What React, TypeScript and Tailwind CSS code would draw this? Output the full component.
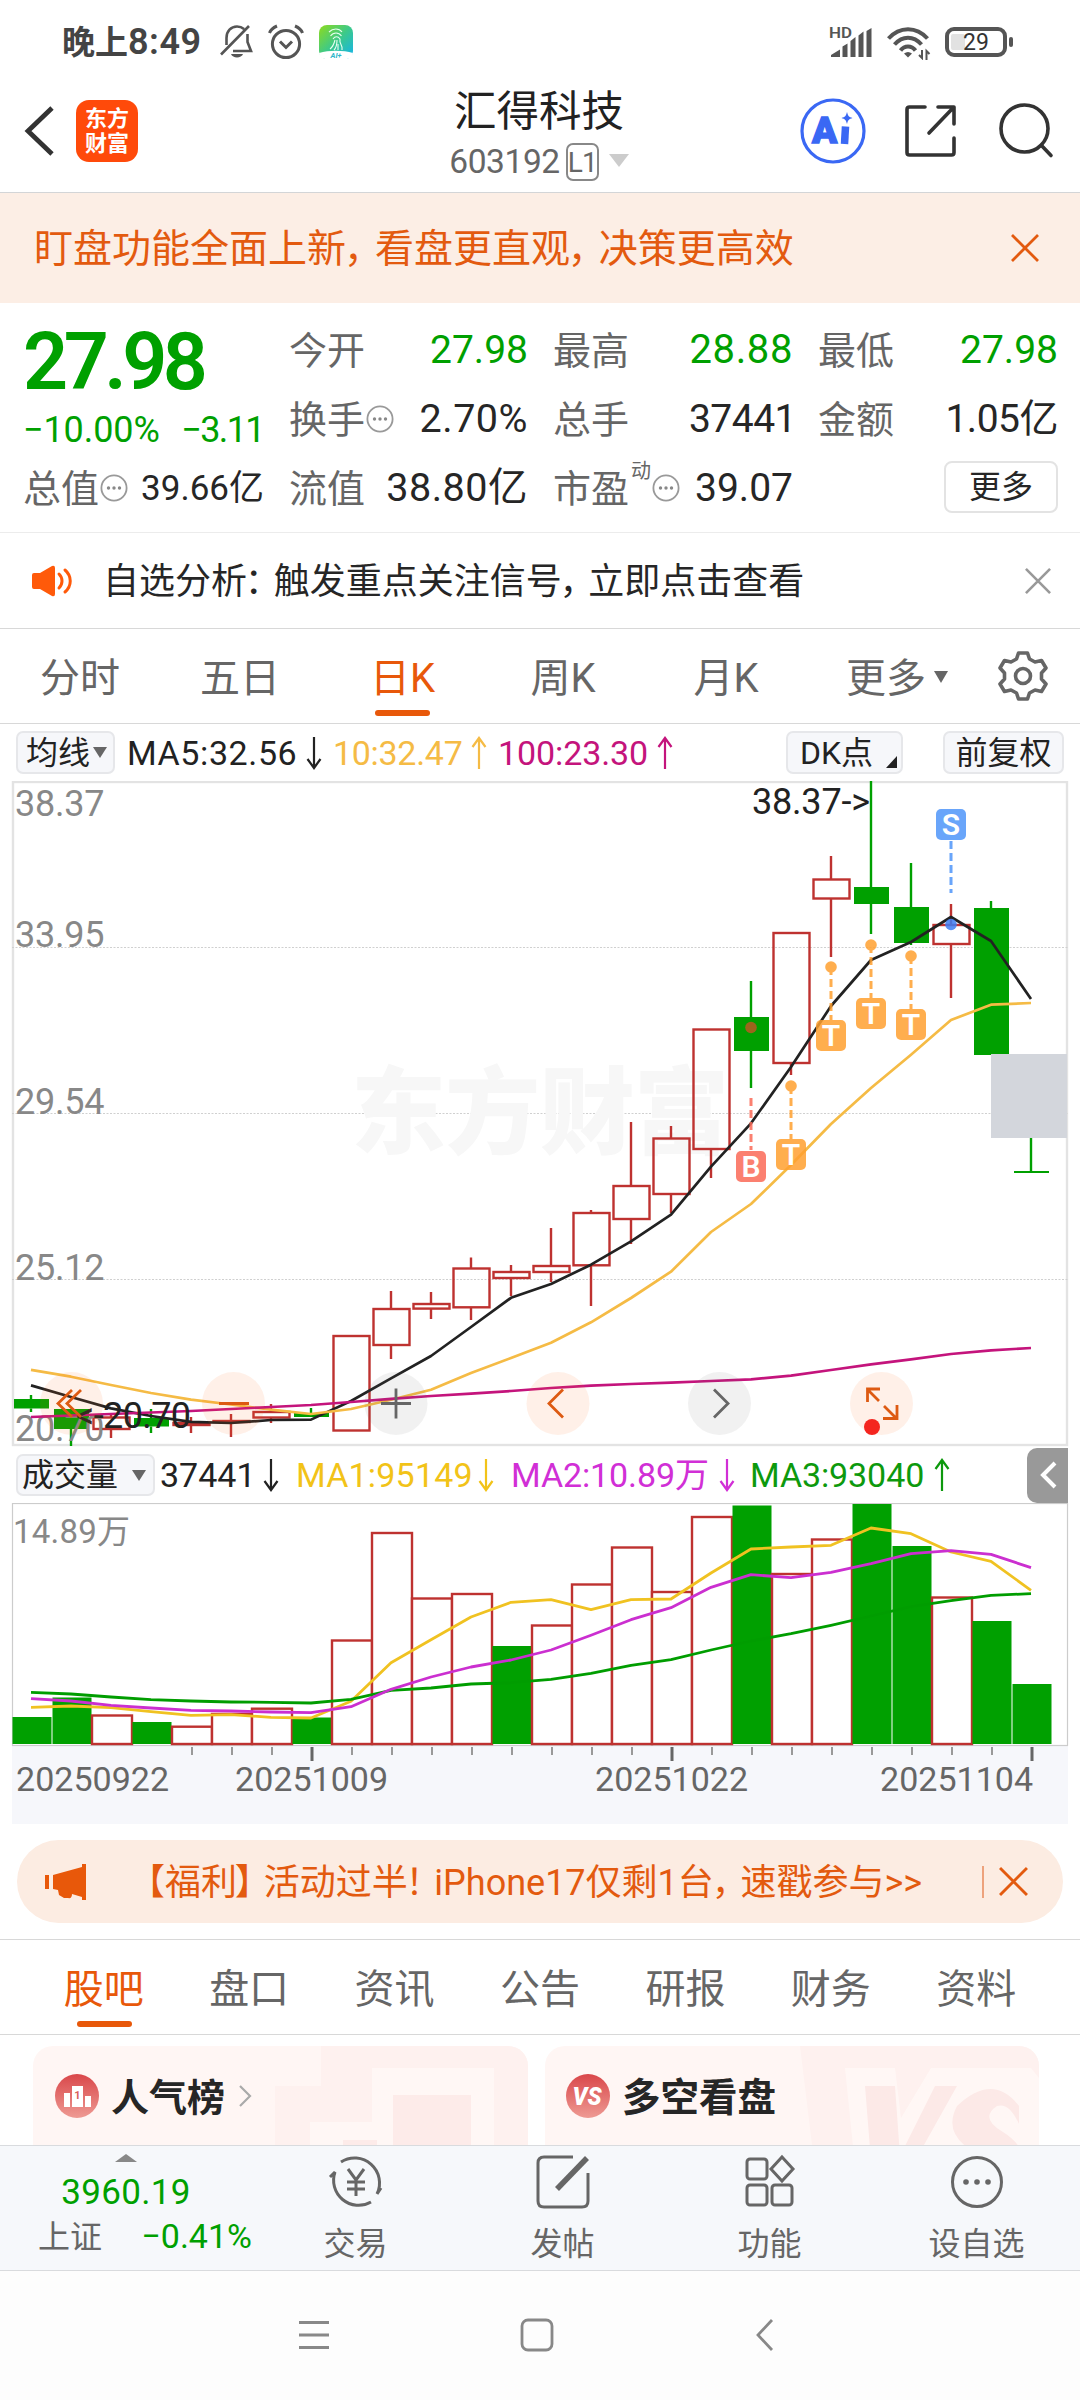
import type { ReactNode } from 'react'
import clsx from 'clsx'

type Candle = [up: 0 | 1, top: number, bottom: number, high: number, low: number]

const GREEN = '#00a000'
const RED = '#be3230'

const candles: Candle[] = [
  [0, 1399, 1408.5, 1395, 1412],
  [0, 1409, 1429, 1409, 1446],
  [1, 1417.5, 1429, 1413, 1438],
  [0, 1418, 1426.5, 1409, 1433],
  [1, 1423, 1425, 1417, 1433],
  [1, 1421, 1422, 1414, 1437],
  [1, 1412, 1417.5, 1404, 1423],
  [0, 1413, 1417, 1408, 1417],
  [1, 1336, 1430.5, 1336, 1430.5],
  [1, 1309, 1345, 1291, 1359],
  [1, 1304, 1308.6, 1292, 1319],
  [1, 1268.5, 1307.3, 1257.5, 1320],
  [1, 1272, 1278, 1265, 1296],
  [1, 1266, 1272, 1228, 1282],
  [1, 1213, 1265.3, 1210, 1306],
  [1, 1186, 1219, 1122, 1244],
  [1, 1138.5, 1194, 1126, 1213],
  [1, 1029.5, 1149, 1029.5, 1178],
  [0, 1017, 1051, 981, 1088],
  [1, 933, 1063, 933, 1075],
  [1, 879.5, 898.5, 856, 957],
  [0, 887, 904, 781, 934],
  [0, 907, 943, 863, 945],
  [1, 925, 944, 904, 998],
  [0, 908, 1055, 901, 1055],
  [0, 1171, 1173, 1138, 1173],
]

const ma5 = [1385.4, 1397, 1408.4, 1416, 1421.8, 1423, 1420, 1419.6, 1401, 1378.4, 1356, 1327, 1297.8, 1284, 1264.7, 1241.3, 1214.7, 1166.7, 1123.3, 1067, 1006, 960, 942, 917, 941, 999]
const ma10 = [1369.8, 1376.7, 1385, 1393, 1399.7, 1404.5, 1409.7, 1414, 1409, 1399.7, 1389.7, 1373, 1358, 1342.7, 1322.3, 1298, 1271.7, 1232, 1204, 1165, 1124, 1088, 1054.7, 1020, 1004.7, 1003]
const ma100 = [1417, 1415.5, 1414, 1412.5, 1411, 1409, 1407, 1405, 1402, 1398.8, 1396, 1393.6, 1391, 1388, 1385.7, 1384, 1382.7, 1381, 1379.3, 1375.7, 1370, 1364.3, 1359.3, 1354, 1350.3, 1348]

const volumes: [up: 0 | 1, top: number][] = [
  [0, 1717], [0, 1697.5], [1, 1715.5], [0, 1722], [1, 1726.7], [1, 1714], [1, 1708.7], [0, 1717.5], [1, 1640.5],
  [1, 1533], [1, 1598.5], [1, 1594], [0, 1646], [1, 1625.5], [1, 1584.5], [1, 1547.5], [1, 1592], [1, 1517],
  [0, 1505.5], [1, 1574], [1, 1539.5], [0, 1504], [0, 1546], [1, 1597.5], [0, 1621], [0, 1684],
]

const vol5 = [1707.3, 1706, 1707.7, 1711.7, 1715.3, 1714.7, 1717.3, 1718, 1701.3, 1662.7, 1639.7, 1617, 1602.3, 1599.7, 1609.7, 1599.7, 1599, 1573, 1549, 1547, 1545.3, 1528, 1533.7, 1552, 1561.3, 1590.3]
const vol10 = [1698.7, 1701, 1705.3, 1708, 1710.3, 1711, 1712, 1712.7, 1706.7, 1689.3, 1677, 1667, 1660, 1650, 1635.3, 1619.7, 1607.7, 1587.3, 1574.7, 1577.7, 1572.3, 1563.7, 1553.7, 1550.7, 1554.3, 1567.7]
const vol20 = [1692.3, 1694, 1697, 1699.7, 1701, 1702, 1702.3, 1703, 1699.3, 1690.3, 1688, 1684, 1682.7, 1679.3, 1673.3, 1665.3, 1659.7, 1650, 1641, 1633.7, 1625.3, 1616, 1606.7, 1600.7, 1595.3, 1593.7]

const cx = (i: number) => 31 + i * 40
const line = (ys: number[]) => ys.map((y, i) => `${cx(i)},${y}`).join(' ')

// Full-width punctuation, set on a half-width body plus a little air
const P = ({ children }: { children: ReactNode }) => (
  <span className="-ml-[0.06em] mr-[0.3em] [font-feature-settings:'halt']">{children}</span>
)

const Cross = ({ size, color, width = 2.8 }: { size: number; color: string; width?: number }) => (
  <svg width={size} height={size} viewBox="0 0 28 28" fill="none" stroke={color} strokeWidth={width}>
    <path d="M1 1l26 26M27 1L1 27" />
  </svg>
)

const More = () => (
  <svg width="28" height="28" viewBox="0 0 28 28" fill="none" stroke="#999" strokeWidth="1.8">
    <circle cx="14" cy="14" r="12.6" />
    <g fill="#888" stroke="none">
      <circle cx="8.5" cy="14" r="1.7" />
      <circle cx="14" cy="14" r="1.7" />
      <circle cx="19.5" cy="14" r="1.7" />
    </g>
  </svg>
)

const Arrow = ({ up, color, className }: { up?: boolean; color: string; className?: string }) => (
  <svg width="16" height="34" viewBox="0 0 16 34" fill="none" stroke={color} strokeWidth="2.2" className={clsx('shrink-0', className)}>
    <path d={up ? 'M8 33V2M1.500 11L8 2l6.500 9' : 'M8 1v31M1.500 23L8 32l6.500-9'} />
  </svg>
)

function StatusBar() {
  return (
    <div className="h-[84px] flex items-center justify-between pl-[62px] pr-[65px] text-[#444]">
      <div className="flex items-center">
        <span className="text-[33px] leading-none font-semibold w-[157px] whitespace-nowrap">晚上<span className="text-[36px] tracking-[0.5px]">8:49</span></span>
        <svg width="34" height="36" viewBox="0 0 34 36" fill="none" stroke="#555" strokeWidth="2.6">
          <path d="M7.500 21v-7C7.500 7 12 2.500 18 2.500c3 0 5 .8 7 2.500M28.500 10v8l3.500 9H14M2 30.500L30 2" />
          <path d="M12 30h12c-1.500 4.500-10.500 4.500-12 0z" fill="#555" stroke="none" />
        </svg>
        <svg width="36" height="36" viewBox="0 0 36 36" fill="none" stroke="#555" strokeWidth="3" className="ml-[15px]">
          <circle cx="18" cy="20" r="13.600" />
          <path d="M12 17.500l6 6 6-6M1.500 9c1-3 4-5.500 7.500-7M34.500 9c-1-3-4-5.500-7.500-7" />
        </svg>
        <svg width="34" height="36" viewBox="0 0 34 36" className="ml-[15px]">
          <defs>
            <linearGradient id="app" x1="0" y1="0" x2="1" y2="1">
              <stop offset="0" stopColor="#8edb1d" />
              <stop offset=".5" stopColor="#3cc98a" />
              <stop offset="1" stopColor="#12b2f0" />
            </linearGradient>
          </defs>
          <rect y="1" width="34" height="34" rx="8" fill="url(#app)" />
          <path d="M0 29c10-3 24-3 34 0-1 5-4 6-8 6H8c-4 0-7-1-8-6z" fill="#fff" />
          <path d="M10 8c4-4 10-4 13 0M11.500 12c3-4 8-4 11 0M14 15c2-3 5-3 7 0v3l2 5v3M11 25c3-2 4-5 5-9M18 16c0 5-1 8-3 10M19 20v6" fill="none" stroke="#e8fff0" strokeWidth="1.100" />
          <text x="17" y="34" fontSize="7.500" fontWeight="700" fontStyle="italic" textAnchor="middle" fill="#2db6c9">AI+</text>
        </svg>
      </div>
      <div className="flex items-center">
        <svg width="44" height="36" viewBox="0 0 44 36" fill="#555">
          <text x="0" y="14" fontSize="15" fontWeight="600" textLength="23" lengthAdjust="spacingAndGlyphs">HD</text>
          <path d="M2 33v-2l9-5.500V33zM13.500 33V22.500l5-3V33zM21.500 33V17l5-4v20zM29.500 33V11.500l5-4V33zM37.500 33V7l5-3v29z" />
        </svg>
        <svg width="44" height="36" viewBox="0 0 44 36" fill="none" stroke="#555" strokeWidth="4" className="ml-[14px]">
          <path d="M1.500 14.500c11-12.500 28-12.500 39 0M7.500 20.500c8-9 19-9 27 0M13.500 26.500c4-5.500 11-5.500 15 0" />
          <path d="M17 29.500q4-3 8 0l-4 4z" fill="#555" stroke="none" />
          <path d="M35 26v8l-3-3M39.500 36v-9l3 3" strokeWidth="2" />
        </svg>
        <svg width="70" height="36" viewBox="0 0 70 36" className="ml-[14px]">
          <rect x="2" y="5" width="58" height="26" rx="7" fill="none" stroke="#555" strokeWidth="4" />
          <rect x="6" y="10" width="14" height="16" rx="2" fill="#e2e2e2" />
          <rect x="64" y="13" width="4" height="10" rx="2" fill="#555" />
          <text x="31" y="26" fontSize="23" textAnchor="middle" fill="#333">29</text>
        </svg>
      </div>
    </div>
  )
}

function Header() {
  return (
    <header className="h-[109px] flex items-start justify-between border-b border-[#d3d5d7] pl-6 pr-[26px]">
      <div className="flex items-center w-[260px] pt-4">
        <svg width="30" height="52" viewBox="0 0 30 52" fill="none" stroke="#333" strokeWidth="4.800">
          <path d="M28 3L4 26l24 23" />
        </svg>
        <div className="ml-[22px] size-[62px] rounded-[13px] bg-[#ff4a0a] text-white text-[22px] leading-[25px] font-bold flex flex-col items-center justify-center">
          <span>东方</span>
          <span>财富</span>
        </div>
      </div>
      <div className="flex flex-col items-center">
        <h1 className="pt-[2px] text-[42.500px] leading-[52px] text-[#222]">汇得科技</h1>
        <div className="flex items-center h-10 mt-[4px] text-[#666]">
          <span className="text-[33.500px] leading-none tracking-[-0.4px]">603192</span>
          <span className="ml-[6px] h-[38px] w-[33px] rounded-[7px] border-2 border-[#888] text-[28px] leading-[35px] text-center tracking-[-1px]">L1</span>
          <span className="ml-[10px] -mt-[3px] border-x-[10px] border-t-[13px] border-x-transparent border-t-[#ccc]" />
        </div>
      </div>
      <div className="flex items-center justify-end w-[260px] pt-[13px]">
        <svg width="68" height="68" viewBox="0 0 68 68" fill="none" stroke="#3a68f4" strokeWidth="3.200">
          <circle cx="34" cy="34" r="31" />
          <text x="13" y="46" fontSize="37" fontWeight="900" fill="#3a68f4" strokeWidth="1.400">A</text>
          <path d="M46.500 29.500l-1 17.500" strokeWidth="7.500" />
          <path d="M48 15c1 4 2 5 5.500 6-3.500 1-4.500 2-5.500 6-1-4-2-5-5.500-6 3.500-1 4.500-2 5.500-6z" fill="#3a68f4" stroke="none" />
        </svg>
        <svg width="56" height="56" viewBox="0 0 56 56" fill="none" stroke="#333" strokeWidth="3.600" strokeLinecap="round" strokeLinejoin="round" className="ml-9">
          <path d="M22 4H6.500q-2.500 0-2.500 2.500v43q0 2.500 2.500 2.500h42q2.500 0 2.500-2.500V35M35 4h16v17M50 5L26 30" />
        </svg>
        <svg width="56" height="56" viewBox="0 0 56 56" fill="none" stroke="#333" strokeWidth="3.600" strokeLinecap="round" className="ml-[39px]">
          <circle cx="26.500" cy="25.500" r="23.500" />
          <path d="M43.500 42.500l9.500 10" />
        </svg>
      </div>
    </header>
  )
}

type FieldProps = { label: string; value: string; more?: boolean; sup?: string; valueClass?: string }

function Field({ label, value, more, sup, valueClass }: FieldProps) {
  return (
    <div className="flex items-center justify-between whitespace-nowrap leading-none">
      <span className="flex items-center pt-[2px] text-[38px] text-[#666]">
        {label}
        {sup && <sup className="text-[20px] leading-none top-0 -mt-[36px] ml-[2px]">{sup}</sup>}
        {more && <span className="ml-[1px] -mt-[2px]"><More /></span>}
      </span>
      <span className={clsx('pt-px', valueClass ?? 'text-[39px] text-[#262626]')}>{value}</span>
    </div>
  )
}

function Quote() {
  return (
    <section className="h-[230px] pt-3 pl-[23px] border-b border-[#ececec]">
      <div className="grid grid-cols-[241px_239px_240px_240px] grid-rows-[69px_69px_69px] gap-x-[25px]">
        <div className="row-span-2 text-[#00a000] leading-none">
          <div className="h-[90px] pt-[5px] flex items-center text-[79px] font-semibold tracking-[-4.500px]">27.98</div>
          <div className="h-12 pt-[2px] flex items-center justify-between text-[36px] tracking-[-0.1px] whitespace-nowrap">
            <span>−10.00%</span>
            <span className="tracking-[-1.600px]">−3.11</span>
          </div>
        </div>
        <Field label="今开" value="27.98" valueClass="text-[39px] text-[#00a000]" />
        <Field label="最高" value="28.88" valueClass="text-[40px] tracking-[0.6px] text-[#00a000]" />
        <Field label="最低" value="27.98" valueClass="text-[39px] text-[#00a000]" />
        <Field label="换手" value="2.70%" more valueClass="text-[39.500px] tracking-[0.5px] text-[#262626]" />
        <Field label="总手" value="37441" valueClass="text-[39px] tracking-[-0.5px] text-[#262626] -mr-[3px]" />
        <Field label="金额" value="1.05亿" valueClass="text-[39px] tracking-[-0.5px] text-[#262626]" />
        <Field label="总值" value="39.66亿" more valueClass="text-[35px] text-[#262626]" />
        <Field label="流值" value="38.80亿" valueClass="text-[39.500px] tracking-[0.5px] text-[#262626]" />
        <Field label="市盈" value="39.07" sup="动" more valueClass="text-[39px] text-[#262626]" />
        <button className="justify-self-end self-center -mt-px h-[52px] w-[114px] rounded-[8px] border-2 border-[#e3e3e3] text-[32px] leading-none text-[#262626]">更多</button>
      </div>
    </section>
  )
}

const periods = [
  { label: '分时', width: 160 },
  { label: '五日', width: 160 },
  { label: '日K', width: 165 },
  { label: '周K', width: 156 },
  { label: '月K', width: 170 },
]

function PeriodTabs() {
  return (
    <nav className="h-[95px] flex border-b border-[#d8d8d8] text-[40px] leading-none text-[#666]">
      {periods.map(({ label, width }) => (
        <div key={label} className={clsx('relative flex items-center justify-center pt-[5px]', label === '日K' && 'text-[#e8580a]')} style={{ width }}>
          {label}
          {label === '日K' && <span className="absolute left-[55px] bottom-[7px] h-[6px] w-[55px] rounded-full bg-[#e8580a]" />}
        </div>
      ))}
      <div className="flex items-center pl-[35px] pt-[5px]">
        更多
        <span className="ml-[8px] -mt-[4px] border-x-[7px] border-t-[12px] border-x-transparent border-t-[#666]" />
      </div>
      <svg width="52" height="52" viewBox="0 0 52 52" fill="none" stroke="#666" strokeWidth="3.600" strokeLinejoin="round" className="ml-[49px] mt-[21px]">
        <path d="M21.500 3h9l2 6 5.500 3 6.500-1.500 4.500 7.500-4.500 5v6l4.500 5-4.500 7.500-6.500-1.500-5.500 3-2 6h-9l-2-6-5.500-3-6.500 1.500L3 34l4.500-5v-6L3 18l4.500-7.500L14 12l5.500-3z" />
        <circle cx="26" cy="26" r="7.500" />
      </svg>
    </nav>
  )
}

function MaBar() {
  return (
    <div className="h-[57px] flex items-center pl-4 pr-4 text-[34px] leading-none whitespace-nowrap">
      <div className="h-[43px] w-[99px] rounded-[7px] border-2 border-[#e6e7ea] bg-[#f6f7fa] flex items-center pl-2 text-[32px] text-[#222]">
        均线
        <span className="ml-[3px] border-x-[7px] border-t-[11px] border-x-transparent border-t-[#666]" />
      </div>
      <span className="ml-3 w-[176px] text-[#222] tracking-[0.6px]">MA5:32.56</span>
      <Arrow color="#222" className="ml-[3px]" />
      <span className="ml-[11px] w-[134px] text-[#f5bb45] tracking-[-0.3px]">10:32.47</span>
      <Arrow up color="#f5bb45" className="ml-1" />
      <span className="ml-[11px] w-[156px] text-[#c4147c] tracking-[-0.1px]">100:23.30</span>
      <Arrow up color="#c4147c" className="ml-[3px]" />
      <div className="relative ml-auto h-[43px] w-[117px] rounded-[7px] border-2 border-[#e6e7ea] bg-[#f6f7fa] flex items-center pl-3 text-[32px] text-[#222]">
        DK点
        <span className="absolute right-1 bottom-1 border-l-[11px] border-b-[12px] border-l-transparent border-b-[#222]" />
      </div>
      <div className="ml-10 h-[43px] w-[121px] rounded-[7px] border-2 border-[#e6e7ea] bg-[#f6f7fa] flex items-center justify-center text-[32px] text-[#222]">前复权</div>
    </div>
  )
}

const marks = [
  { x: 751, y: 1151, dot: 1027.5, from: 1098, to: 1150, letter: 'B', color: '#fb6a58', dotColor: '#b85a22' },
  { x: 791, y: 1139, dot: 1086, from: 1086, to: 1139, letter: 'T', color: '#ffa030', dotColor: '#ffa030' },
  { x: 831, y: 1020, dot: 967, from: 967, to: 1020, letter: 'T', color: '#ffa030', dotColor: '#ffa030' },
  { x: 871, y: 998, dot: 945, from: 945, to: 998, letter: 'T', color: '#ffa030', dotColor: '#ffa030' },
  { x: 911, y: 1009, dot: 956, from: 956, to: 1009, letter: 'T', color: '#ffa030', dotColor: '#ffa030' },
  { x: 951, y: 809, dot: 924.5, from: 841, to: 893, letter: 'S', color: '#4f96fa', dotColor: '#3f7ff5' },
]

const labels: [string, number][] = [
  ['38.37', 816],
  ['33.95', 947],
  ['29.54', 1113.5],
  ['25.12', 1280],
  ['20.70', 1441],
]

function KLine() {
  return (
    <svg width="1080" height="666" viewBox="0 781 1080 666" className="block">
      <rect x="13" y="782" width="1054" height="663" fill="#fff" stroke="#e3e3e3" strokeWidth="2.400" />
      <g stroke="#d0d0d0" strokeWidth="1" strokeDasharray="2 1.500">
        <path d="M12 947.500h1056M12 1113.500h1056M12 1279.500h1056" />
      </g>
      <text x="351" y="1147" fontSize="95" fontWeight="900" fill="#f7f7f7" textLength="378">东方财富</text>
      {candles.map(([up, top, bottom, high, low], i) => (
        <g key={i} stroke={up ? RED : GREEN} strokeWidth="2.400">
          <path d={`M${cx(i)} ${high}V${top}M${cx(i)} ${bottom}V${low}`} />
          {up ? (
            <rect x={cx(i) - 17.5} y={top} width="36" height={bottom - top} fill="none" />
          ) : (
            <rect x={cx(i) - 17} y={top} width="35" height={bottom - top} fill={GREEN} stroke="none" />
          )}
        </g>
      ))}
      <rect x="991" y="1054" width="76" height="84" fill="#d3d6dc" />
      <g fill="#888" fontSize="36">
        {labels.map(([t, y]) => (
          <text key={t} x="15" y={y} textLength="89.500">{t}</text>
        ))}
      </g>
      <g fill="none" strokeWidth="2.700" strokeLinejoin="round">
        <polyline points={line(ma5)} stroke="#222" />
        <polyline points={line(ma10)} stroke="#f5bb45" />
        <polyline points={line(ma100)} stroke="#c4147c" />
      </g>
      <g fill="#222" fontSize="36">
        <text x="752" y="814" textLength="118">38.37-&gt;</text>
        <text x="76" y="1428" textLength="115">&lt;-20.70</text>
      </g>
      {marks.map((m) => (
        <g key={m.x}>
          <g opacity=".85">
            <path d={`M${m.x} ${m.from}V${m.to}`} stroke={m.color} strokeWidth="3" strokeDasharray="8 4" />
            <circle cx={m.x} cy={m.dot} r="5.800" fill={m.dotColor} />
            <rect x={m.x - 15} y={m.y} width="30" height="31" rx="5" fill={m.color} />
          </g>
          <text x={m.x} y={m.y + 26} fontSize="30" fontWeight="600" textAnchor="middle" fill="#fff">{m.letter}</text>
        </g>
      ))}
      <g fill="#ff6a1a" fillOpacity=".1">
        <circle cx="71.500" cy="1403.500" r="31.500" />
        <circle cx="233.500" cy="1403.500" r="31.500" />
        <circle cx="558" cy="1403.500" r="31.500" />
        <circle cx="881.500" cy="1403.500" r="31.500" />
      </g>
      <g fill="#666" fillOpacity=".09">
        <circle cx="396" cy="1403.500" r="31.500" />
        <circle cx="719.500" cy="1403.500" r="31.500" />
      </g>
      <g fill="none" stroke="#dd5a12" strokeWidth="2.800">
        <path d="M72 1390l-14 13.500L72 1417M81 1390l-14 13.500L81 1417M219 1403.500h30M563 1389.500l-14 14 14 14" />
        <path d="M879 1401l-11-11M867.500 1402v-13h12.500M884 1406l12 12M897 1405v13.500h-14" />
      </g>
      <g fill="none" stroke="#666" strokeWidth="2.800">
        <path d="M381 1403.500h30M396 1388.500v30M714 1389.500l14 14-14 14" />
      </g>
      <circle cx="872" cy="1427" r="8" fill="#f4251f" />
    </svg>
  )
}

function VolumeBar() {
  return (
    <div className="h-14 flex items-center pl-4 pr-3 text-[34px] leading-none whitespace-nowrap">
      <div className="h-[42px] w-[139px] rounded-[7px] border-2 border-[#e6e7ea] bg-[#f6f7fa] flex items-center pl-1 text-[32px] text-[#222]">
        成交量
        <span className="ml-[14px] border-x-[7px] border-t-[11px] border-x-transparent border-t-[#666]" />
      </div>
      <span className="ml-[5px] w-[103px] text-[#222]">37441</span>
      <Arrow color="#222" />
      <span className="ml-[17px] w-[183px] text-[#f2c318] tracking-[0.2px]">MA1:95149</span>
      <Arrow color="#f2c318" className="-ml-[1px]" />
      <span className="ml-[17px] w-[206px] text-[#d12fd6] tracking-[-0.1px]">MA2:10.89万</span>
      <Arrow color="#d12fd6" className="ml-[2px]" />
      <span className="ml-[15px] w-[184px] text-[#0d990d] tracking-[-0.1px]">MA3:93040</span>
      <Arrow up color="#0d990d" />
      <div className="ml-auto h-[55px] w-[41px] rounded-l-[10px] bg-[#999] flex items-center justify-center">
        <svg width="18" height="28" viewBox="0 0 18 28" fill="none" stroke="#fff" strokeWidth="4">
          <path d="M16 2L4 14l12 12" />
        </svg>
      </div>
    </div>
  )
}

function Volume() {
  return (
    <svg width="1080" height="321" viewBox="0 1503 1080 321" className="block">
      <rect x="12" y="1746" width="1056" height="78" fill="#f6f7fb" />
      <rect x="12.500" y="1503.500" width="1055" height="242" fill="#fff" stroke="#ccc" strokeWidth="1.200" />
      {volumes.map(([up, top], i) =>
        up ? (
          <rect key={i} x={cx(i) - 19} y={top} width="40" height={1744 - top} fill="#fff" stroke={RED} strokeWidth="2.400" />
        ) : (
          <rect key={i} x={cx(i) - 18.5} y={top} width="39" height={1744 - top} fill={GREEN} />
        ),
      )}
      <text x="13" y="1543" fontSize="33" fill="#888" textLength="117">14.89万</text>
      <g fill="none" strokeWidth="2.800" strokeLinejoin="round">
        <polyline points={line(vol5)} stroke="#f0c221" />
        <polyline points={line(vol20)} stroke="#009d00" />
        <polyline points={line(vol10)} stroke="#cb2fd0" />
      </g>
      {volumes.map((_, i) =>
        i < 4 ? null : <path key={i} d={i % 9 === 7 ? `M${cx(i) + 1} 1747v14` : `M${cx(i) + 1} 1747v8`} stroke={i % 9 === 7 ? '#666' : '#999'} strokeWidth={i % 9 === 7 ? 3 : 2} />,
      )}
      <g fill="#666" fontSize="34">
        <text x="16" y="1791" textLength="153">20250922</text>
        <text x="235" y="1791" textLength="153">20251009</text>
        <text x="595" y="1791" textLength="153">20251022</text>
        <text x="880" y="1791" textLength="153">20251104</text>
      </g>
    </svg>
  )
}

function Promo() {
  return (
    <div className="mt-4 mx-[17px] h-[83px] rounded-full bg-[#fcece2] flex items-center pl-[27px] text-[36px] leading-none text-[#e35a0f] whitespace-nowrap">
      <svg width="44" height="38" viewBox="0 0 44 38" fill="#e8580a">
        <path d="M1 12h4v14H1zM9 12l29-8V1h4v36h-4v-3l-10-3q0 5-4 4h-4l-5-3-1-5-5-1z" />
      </svg>
      <span className="ml-[41px] pt-[3px]">
        【福利<P>】</P>活动过半<P>！</P>iPhone17仅剩1台<P>，</P>速戳参与&gt;&gt;
      </span>
      <span className="ml-auto h-8 w-[2px] bg-[#eda27c]" />
      <span className="ml-[15px] mr-[35px]"><Cross size={29} color="#e35a0f" /></span>
    </div>
  )
}

const sections = ['股吧', '盘口', '资讯', '公告', '研报', '财务', '资料']

function SectionTabs() {
  return (
    <nav className="mt-4 h-24 border-y border-[#d8d8d8] grid grid-cols-7 px-[31px] text-[40px] leading-none text-[#666]">
      {sections.map((s, i) => (
        <div key={s} className={clsx('relative flex items-center justify-center pt-[6px]', i === 0 && 'text-[#e8580a]')}>
          {s}
          {i === 0 && <span className="absolute left-[46px] bottom-[7px] h-[6px] w-[55px] rounded-full bg-[#e8580a]" />}
        </div>
      ))}
    </nav>
  )
}

function Cards() {
  return (
    <div className="h-[110px] pt-[11px] px-[33px] flex gap-[17px] overflow-hidden">
      <div className="relative w-[495px] h-[140px] rounded-[20px] bg-[#fff6f4] overflow-hidden">
        <svg width="495" height="140" viewBox="0 0 495 140" className="absolute inset-0">
          <path d="M242 140V40h46V0h207v140z" fill="#fef1ef" />
          <path d="M277 140V76h62V22h122v118z" fill="#fff7f5" />
          <path d="M360 140V49h78v91z" fill="#fdebe9" />
          <path d="M310 140v-46h34v46z" fill="#fdebe9" />
        </svg>
        <div className="relative flex items-center pt-[28px] pl-[22px]">
          <svg width="44" height="44" viewBox="0 0 44 44">
            <defs>
              <linearGradient id="badge" x1="0" y1="0" x2="0" y2="1">
                <stop offset="0" stopColor="#d9474a" />
                <stop offset="1" stopColor="#ee9a93" />
              </linearGradient>
            </defs>
            <circle cx="22" cy="22" r="22" fill="url(#badge)" />
            <path d="M9 33V19h6v14zM17 33V12h11v21zM30 33V22h6v11z" fill="#fff" />
            <text x="22.500" y="25" fontSize="11" fontWeight="700" textAnchor="middle" fill="#d9605c">1</text>
          </svg>
          <span className="ml-3 pt-1 text-[38px] leading-none font-bold text-[#262626]">人气榜</span>
          <svg width="14" height="22" viewBox="0 0 14 22" fill="none" stroke="#aaa" strokeWidth="2.200" className="ml-[13px]">
            <path d="M2 1l10 10L2 21" />
          </svg>
        </div>
      </div>
      <div className="relative w-[494px] h-[140px] rounded-[20px] bg-[#fff6f4] overflow-hidden">
        <svg width="494" height="140" viewBox="0 0 494 140" className="absolute inset-0">
          <path d="M255 0h239v140H272z" fill="#fef1ef" />
          <path d="M300 22h50l6 50 30-50h100l8 10v108H312z" fill="#fff7f5" />
          <path d="M320 40h30l5 70 35-70h22l-56 100h-28z" fill="#fce9e7" />
          <path d="M474 60q-26-34-62 0-14 26 14 44 20 14 10 36h38q16-34-16-54-24-14-6-26 12-4 22 18z" fill="#fce9e7" />
        </svg>
        <div className="relative flex items-center pt-[28px] pl-[21px]">
          <svg width="44" height="44" viewBox="0 0 44 44">
            <circle cx="22" cy="22" r="22" fill="url(#badge)" />
            <text x="21" y="31" fontSize="25" fontWeight="900" fontStyle="italic" textAnchor="middle" fill="#fff" textLength="29" lengthAdjust="spacingAndGlyphs">VS</text>
          </svg>
          <span className="ml-3 pt-1 text-[38.500px] leading-none font-bold text-[#262626]">多空看盘</span>
        </div>
      </div>
    </div>
  )
}

const actions = [
  {
    label: '交易',
    icon: (
      <>
        <path d="M15 10a25 25 0 0 1 36 32l4-6M45 50A25 25 0 0 1 9 20l-5 5" />
        <path d="M22 17l8 11 8-11M30 28v16M21 30h18M21 37h18" />
      </>
    ),
  },
  {
    label: '发帖',
    icon: (
      <>
        <path d="M40 5H11q-6 0-6 6v38q0 6 6 6h38q6 0 6-6V21" />
        <path d="M54 6L24 37" strokeWidth="5.500" />
      </>
    ),
  },
  {
    label: '功能',
    icon: (
      <>
        <rect x="7" y="7" width="20" height="20" rx="3" />
        <path d="M42 5l11 12-11 12-11-12z" />
        <rect x="7" y="33" width="20" height="20" rx="3" />
        <rect x="32" y="33" width="20" height="20" rx="3" />
      </>
    ),
  },
  {
    label: '设自选',
    icon: (
      <>
        <circle cx="30" cy="30" r="24.500" />
        <g fill="#666" stroke="none">
          <circle cx="19" cy="30" r="2.800" />
          <circle cx="30" cy="30" r="2.800" />
          <circle cx="41" cy="30" r="2.800" />
        </g>
      </>
    ),
  },
]

function BottomBar() {
  return (
    <div className="h-[126px] border-y border-[#d9dbde] bg-[#f6f8fb] flex leading-none text-[#666]">
      <div className="w-[252px] flex flex-col items-center pt-2">
        <span className="border-x-[11px] border-b-[8px] border-x-transparent border-b-[#888]" />
        <span className="mt-[13px] text-[35px] tracking-[0.3px] text-[#00a000]">3960.19</span>
        <div className="mt-[9px] w-full pl-[38px] flex items-center justify-between text-[32px] whitespace-nowrap">
          <span className="pt-px">上证</span>
          <span className="text-[34px] text-[#00a000]">−0.41%</span>
        </div>
      </div>
      <div className="flex">
        {actions.map(({ label, icon }) => (
          <div key={label} className="w-[207px] flex flex-col items-center pt-[6px]">
            <svg width="60" height="60" viewBox="0 0 60 60" fill="none" stroke="#666" strokeWidth="3">{icon}</svg>
            <span className="mt-4 text-[32px]">{label}</span>
          </div>
        ))}
      </div>
    </div>
  )
}

export default function App() {
  return (
    <div className="w-[1080px] h-[2400px] overflow-hidden bg-white font-['Roboto','Noto_Sans_CJK_SC',sans-serif]">
      <StatusBar />
      <Header />
      <div className="h-[110px] bg-[#fceee5] flex items-center justify-between pl-[34px] pr-[41px] text-[39px] leading-none text-[#e35a0f]">
        <span className="whitespace-nowrap pt-[3px]">盯盘功能全面上新<P>，</P>看盘更直观<P>，</P>决策更高效</span>
        <Cross size={28} color="#e35a0f" />
      </div>
      <Quote />
      <div className="h-24 flex items-center border-b border-[#d8d8d8] pl-[31px] pr-[29px] text-[36px] leading-none text-[#262626]">
        <svg width="42" height="34" viewBox="0 0 42 34" fill="#ff5a0a">
          <path d="M1 11q0-2 2-2h6L21 2q3-1 3 2v26q0 3-3 2L9 25H3q-2 0-2-2z" />
          <path d="M28 10c4 4 4 10 0 14M34 6c7 6 7 16 0 22" fill="none" stroke="#ff5a0a" strokeWidth="3" strokeLinecap="round" />
        </svg>
        <span className="ml-[30px] pt-[3px] whitespace-nowrap">自选分析<P>：</P>触发重点关注信号<P>，</P>立即点击查看</span>
        <span className="ml-auto"><Cross size={26} color="#999" /></span>
      </div>
      <PeriodTabs />
      <MaBar />
      <KLine />
      <VolumeBar />
      <Volume />
      <Promo />
      <SectionTabs />
      <Cards />
      <BottomBar />
      <div className="h-[129px] bg-[#fdfdfd] flex items-center">
        <svg width="1080" height="40" viewBox="0 0 1080 40" fill="none" stroke="#888" strokeWidth="2.800">
          <path d="M299 6.500h30M299 19h30M299 31.500h30M772 4l-14 15 14 15" />
          <rect x="522" y="4" width="30" height="30" rx="6" />
        </svg>
      </div>
    </div>
  )
}
